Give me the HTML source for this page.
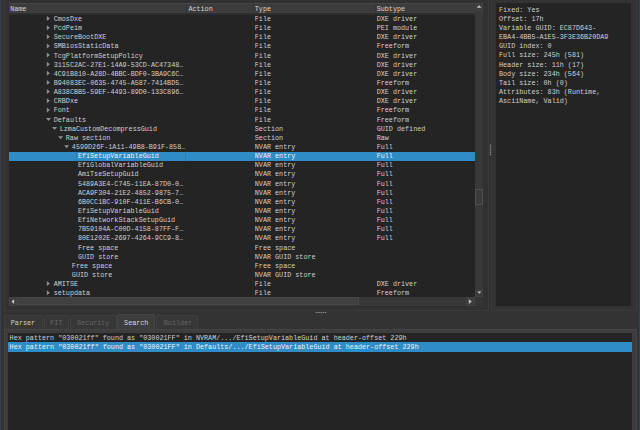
<!DOCTYPE html>
<html><head><meta charset="utf-8">
<style>
*{margin:0;padding:0;box-sizing:border-box}
html,body{width:640px;height:430px;overflow:hidden;background:#333333}
body{position:relative;font-family:"Liberation Mono",monospace;font-size:6.75px;color:#d0d0d0}
#edgeL{position:absolute;left:0;top:0;width:1px;height:430px;background:#3a404c}
#edgeR{position:absolute;left:639px;top:0;width:1px;height:430px;background:#3a404c}
#frameL{position:absolute;left:4px;top:0;width:485px;height:311px;background:#313131;border:1px solid #3a3a3a;border-top:none}
#frameR{position:absolute;left:491px;top:0;width:146px;height:311px;background:#333333;border:1px solid #3a3a3a;border-top:none}
#splitV{position:absolute;left:489px;top:0;width:2px;height:311px;background:#313131}
#tree{position:absolute;left:9px;top:3px;width:474.2px;height:303px;background:#242424;overflow:hidden}
#hdr{position:absolute;z-index:2;left:0;top:0;width:465.5px;height:12px;background:#3c3c3c;border-top:1px solid #464646;border-bottom:2px solid #2d2d2d;box-shadow:inset 0 -1px 0 #414141}
#hdr span{position:absolute;top:1.3px;line-height:9px;color:#d8d8d8}
.sep{position:absolute;top:0px;width:1px;height:9px;background:#363636}
#rows{position:absolute;left:-9px;top:-3px;width:483.5px;height:306px}
.row{position:absolute;left:9px;width:465.5px;height:9.6px}
.row.sel::before{content:'';position:absolute;left:0;top:0.8px;width:100%;height:9.2px;background:#308cc6}
.row .t{position:absolute;top:1.0px;line-height:9.14px;white-space:pre;left:0}
.row.sel .t{color:#eef4fa}
#vsb{position:absolute;left:466px;top:0;width:8.2px;height:303px;background:#383838}
.btn{position:absolute;background:#3c3c3c;border:1px solid #424242}
#vh{position:absolute;left:0.3px;top:186.4px;width:8px;height:15.6px;background:#3b3b3b;border:1px solid #505050}
#hsb{position:absolute;left:0;top:293.7px;width:466px;height:9.3px;background:#373737}
#hh{position:absolute;left:8.4px;top:0.5px;width:341.7px;height:8.3px;background:#404040;border:1px solid #484848}
#corner{position:absolute;left:466px;top:294px;width:8.5px;height:9px;background:#353535}
#dotsV{position:absolute;left:490px;top:144.5px;width:1px;height:10px;border-left:1px dotted #8a8a8a}
#info{position:absolute;left:496.3px;top:3px;width:134.4px;height:302.5px;background:#242424}
.il{position:absolute;left:2.7px;line-height:9.15px;white-space:pre}
#dotsH{position:absolute;left:315px;top:312.5px;width:10px;height:1px;border-top:1px dotted #8a8a8a}
.tab{position:absolute;top:315.2px;height:14px;background:#373737;border:1px solid #3f3f3f;border-bottom:none;border-radius:2px 2px 0 0;color:#666666}
.tab span{position:absolute;top:2.9px;line-height:9px;white-space:pre}
.tab.act{top:314px;height:15.2px;background:#3d3d3d;color:#d8d8d8;border-color:#464646}
#tabpane{position:absolute;left:4px;top:328.6px;width:632.5px;height:110px;background:#3d3d3d;border:1px solid #444444}
#msgs{position:absolute;left:8px;top:332.5px;width:623.7px;height:98px;background:#242424}
.ml{position:absolute;left:0;width:623.7px;height:9.8px}
.ml span{position:absolute;left:1.6px;top:1.1px;line-height:9.14px;white-space:pre;font-size:6.75px}
.ml.sel{background:#308cc6}
.ml.sel span{color:#eef4fa}
#ov{position:absolute;left:0;top:0;z-index:10}
</style></head><body>
<div id="edgeL"></div><div id="edgeR"></div>
<div id="frameL"></div>
<div id="splitV"></div>
<div id="frameR"></div>
<div id="tree">
  <div id="hdr">
    <span style="left:1.2px">Name</span>
    <div class="sep" style="left:177.4px"></div><span style="left:179.4px">Action</span>
    <div class="sep" style="left:243.5px"></div><span style="left:245.8px">Type</span>
    <div class="sep" style="left:366px"></div><span style="left:367.7px">Subtype</span>
  </div>
  <div id="rows">
<div class="row" style="top:14.00px"><span class="t" style="left:44.70px">CmosDxe</span><span class="t" style="left:245.8px">File</span><span class="t" style="left:367.7px">DXE driver</span></div>
<div class="row" style="top:23.14px"><span class="t" style="left:44.70px">PcdPeim</span><span class="t" style="left:245.8px">File</span><span class="t" style="left:367.7px">PEI module</span></div>
<div class="row" style="top:32.28px"><span class="t" style="left:44.70px">SecureBootDXE</span><span class="t" style="left:245.8px">File</span><span class="t" style="left:367.7px">DXE driver</span></div>
<div class="row" style="top:41.42px"><span class="t" style="left:44.70px">SMBiosStaticData</span><span class="t" style="left:245.8px">File</span><span class="t" style="left:367.7px">Freeform</span></div>
<div class="row" style="top:50.56px"><span class="t" style="left:44.70px">TcgPlatformSetupPolicy</span><span class="t" style="left:245.8px">File</span><span class="t" style="left:367.7px">DXE driver</span></div>
<div class="row" style="top:59.70px"><span class="t" style="left:44.70px">3115C2AC-27E1-14A9-53CD-AC47348…</span><span class="t" style="left:245.8px">File</span><span class="t" style="left:367.7px">DXE driver</span></div>
<div class="row" style="top:68.84px"><span class="t" style="left:44.70px">4C91B810-A28D-4BBC-BDF0-3BA9C6C…</span><span class="t" style="left:245.8px">File</span><span class="t" style="left:367.7px">DXE driver</span></div>
<div class="row" style="top:77.98px"><span class="t" style="left:44.70px">B94083EC-0635-4745-A587-7414BD5…</span><span class="t" style="left:245.8px">File</span><span class="t" style="left:367.7px">Freeform</span></div>
<div class="row" style="top:87.12px"><span class="t" style="left:44.70px">A838CBB5-59EF-4493-89D0-133C896…</span><span class="t" style="left:245.8px">File</span><span class="t" style="left:367.7px">DXE driver</span></div>
<div class="row" style="top:96.26px"><span class="t" style="left:44.70px">CRBDxe</span><span class="t" style="left:245.8px">File</span><span class="t" style="left:367.7px">DXE driver</span></div>
<div class="row" style="top:105.40px"><span class="t" style="left:44.70px">Font</span><span class="t" style="left:245.8px">File</span><span class="t" style="left:367.7px">Freeform</span></div>
<div class="row" style="top:114.54px"><span class="t" style="left:44.70px">Defaults</span><span class="t" style="left:245.8px">File</span><span class="t" style="left:367.7px">Freeform</span></div>
<div class="row" style="top:123.68px"><span class="t" style="left:50.75px">LzmaCustomDecompressGuid</span><span class="t" style="left:245.8px">Section</span><span class="t" style="left:367.7px">GUID defined</span></div>
<div class="row" style="top:132.82px"><span class="t" style="left:56.80px">Raw section</span><span class="t" style="left:245.8px">Section</span><span class="t" style="left:367.7px">Raw</span></div>
<div class="row" style="top:141.96px"><span class="t" style="left:62.85px">4599D26F-1A11-49B8-B91F-858…</span><span class="t" style="left:245.8px">NVAR entry</span><span class="t" style="left:367.7px">Full</span></div>
<div class="row sel" style="top:151.10px"><div style="position:absolute;left:67.30px;top:0.8px;width:109.90px;height:9.2px;border-left:1px solid rgba(20,60,90,0.18);border-right:1px solid rgba(20,60,90,0.18)"></div><span class="t" style="left:68.90px">EfiSetupVariableGuid</span><span class="t" style="left:245.8px">NVAR entry</span><span class="t" style="left:367.7px">Full</span></div>
<div class="row" style="top:160.24px"><span class="t" style="left:68.90px">EfiGlobalVariableGuid</span><span class="t" style="left:245.8px">NVAR entry</span><span class="t" style="left:367.7px">Full</span></div>
<div class="row" style="top:169.38px"><span class="t" style="left:68.90px">AmiTseSetupGuid</span><span class="t" style="left:245.8px">NVAR entry</span><span class="t" style="left:367.7px">Full</span></div>
<div class="row" style="top:178.52px"><span class="t" style="left:68.90px">5489A3E4-C745-11EA-87D0-0…</span><span class="t" style="left:245.8px">NVAR entry</span><span class="t" style="left:367.7px">Full</span></div>
<div class="row" style="top:187.66px"><span class="t" style="left:68.90px">ACA9F304-21E2-4852-9875-7…</span><span class="t" style="left:245.8px">NVAR entry</span><span class="t" style="left:367.7px">Full</span></div>
<div class="row" style="top:196.80px"><span class="t" style="left:68.90px">6B0CC1BC-910F-411E-B6CB-0…</span><span class="t" style="left:245.8px">NVAR entry</span><span class="t" style="left:367.7px">Full</span></div>
<div class="row" style="top:205.94px"><span class="t" style="left:68.90px">EfiSetupVariableGuid</span><span class="t" style="left:245.8px">NVAR entry</span><span class="t" style="left:367.7px">Full</span></div>
<div class="row" style="top:215.08px"><span class="t" style="left:68.90px">EfiNetworkStackSetupGuid</span><span class="t" style="left:245.8px">NVAR entry</span><span class="t" style="left:367.7px">Full</span></div>
<div class="row" style="top:224.22px"><span class="t" style="left:68.90px">7B59104A-C00D-4158-87FF-F…</span><span class="t" style="left:245.8px">NVAR entry</span><span class="t" style="left:367.7px">Full</span></div>
<div class="row" style="top:233.36px"><span class="t" style="left:68.90px">80E1202E-2697-4264-9CC9-8…</span><span class="t" style="left:245.8px">NVAR entry</span><span class="t" style="left:367.7px">Full</span></div>
<div class="row" style="top:242.50px"><span class="t" style="left:68.90px">Free space</span><span class="t" style="left:245.8px">Free space</span></div>
<div class="row" style="top:251.64px"><span class="t" style="left:68.90px">GUID store</span><span class="t" style="left:245.8px">NVAR GUID store</span></div>
<div class="row" style="top:260.78px"><span class="t" style="left:62.85px">Free space</span><span class="t" style="left:245.8px">Free space</span></div>
<div class="row" style="top:269.92px"><span class="t" style="left:62.85px">GUID store</span><span class="t" style="left:245.8px">NVAR GUID store</span></div>
<div class="row" style="top:279.06px"><span class="t" style="left:44.70px">AMITSE</span><span class="t" style="left:245.8px">File</span><span class="t" style="left:367.7px">DXE driver</span></div>
<div class="row" style="top:288.20px"><span class="t" style="left:44.70px">setupdata</span><span class="t" style="left:245.8px">File</span><span class="t" style="left:367.7px">Freeform</span></div>
  </div>
  <div id="vsb">
    <div class="btn" style="left:0;top:0;width:8.2px;height:7.5px"></div>
    <div id="vh"></div>
    <div class="btn" style="left:0;top:285.7px;width:8.2px;height:8.3px"></div>
  </div>
  <div id="hsb">
    <div class="btn" style="left:0;top:0;width:7.6px;height:9px"></div>
    <div id="hh"></div>
    <div class="btn" style="left:457.3px;top:0;width:8.7px;height:9px"></div>
  </div>
  <div id="corner"></div>
</div>

<div id="info">
<div class="il" style="top:2.60px">Fixed: Yes</div>
<div class="il" style="top:11.75px">Offset: 17h</div>
<div class="il" style="top:20.90px">Variable GUID: EC87D643-</div>
<div class="il" style="top:30.05px">EBA4-4BB5-A1E5-3F3E36B20DA9</div>
<div class="il" style="top:39.20px">GUID index: 0</div>
<div class="il" style="top:48.35px">Full size: 245h (581)</div>
<div class="il" style="top:57.50px">Header size: 11h (17)</div>
<div class="il" style="top:66.65px">Body size: 234h (564)</div>
<div class="il" style="top:75.80px">Tail size: 0h (0)</div>
<div class="il" style="top:84.95px">Attributes: 83h (Runtime,</div>
<div class="il" style="top:94.10px">AsciiName, Valid)</div>
</div>

<div id="tabpane"></div>
<div class="tab" style="left:4.3px;width:38.3px"><span style="left:5.5px;color:#d0d0d0">Parser</span></div>
<div class="tab" style="left:43.5px;width:25.6px"><span style="left:5.8px">FIT</span></div>
<div class="tab" style="left:70px;width:46.5px"><span style="left:6px">Security</span></div>
<div class="tab act" style="left:117.3px;width:38px"><span style="left:5.8px;top:3.9px">Search</span></div>
<div class="tab" style="left:156.3px;width:41.8px"><span style="left:6.5px">Builder</span></div>
<div id="msgs">
  <div class="ml" style="top:0"><span>Hex pattern "030021ff" found as "030021FF" in NVRAM/.../EfiSetupVariableGuid at header-offset 229h</span></div>
  <div class="ml sel" style="top:9.5px"><span>Hex pattern "030021ff" found as "030021FF" in Defaults/.../EfiSetupVariableGuid at header-offset 229h</span></div>
</div>
<svg id="ov" width="640" height="430" viewBox="0 0 640 430">
<polygon fill="#8f8f8f" points="46.80,16.00 49.90,18.50 46.80,21.00"/>
<polygon fill="#8f8f8f" points="46.80,25.14 49.90,27.64 46.80,30.14"/>
<polygon fill="#8f8f8f" points="46.80,34.28 49.90,36.78 46.80,39.28"/>
<polygon fill="#8f8f8f" points="46.80,43.42 49.90,45.92 46.80,48.42"/>
<polygon fill="#8f8f8f" points="46.80,52.56 49.90,55.06 46.80,57.56"/>
<polygon fill="#8f8f8f" points="46.80,61.70 49.90,64.20 46.80,66.70"/>
<polygon fill="#8f8f8f" points="46.80,70.84 49.90,73.34 46.80,75.84"/>
<polygon fill="#8f8f8f" points="46.80,79.98 49.90,82.48 46.80,84.98"/>
<polygon fill="#8f8f8f" points="46.80,89.12 49.90,91.62 46.80,94.12"/>
<polygon fill="#8f8f8f" points="46.80,98.26 49.90,100.76 46.80,103.26"/>
<polygon fill="#8f8f8f" points="46.80,107.40 49.90,109.90 46.80,112.40"/>
<polygon fill="#8f8f8f" points="46.00,117.94 51.00,117.94 48.50,120.94"/>
<polygon fill="#8f8f8f" points="52.05,127.08 57.05,127.08 54.55,130.08"/>
<polygon fill="#8f8f8f" points="58.10,136.22 63.10,136.22 60.60,139.22"/>
<polygon fill="#8f8f8f" points="64.15,145.36 69.15,145.36 66.65,148.36"/>
<polygon fill="#8f8f8f" points="46.80,281.06 49.90,283.56 46.80,286.06"/>
<polygon fill="#8f8f8f" points="46.80,290.20 49.90,292.70 46.80,295.20"/>
<rect x="315.60" y="312.0" width="1.1" height="1.1" fill="#9a9a9a"/>
<rect x="489.9" y="144.60" width="1.1" height="1.1" fill="#9a9a9a"/>
<rect x="317.50" y="312.0" width="1.1" height="1.1" fill="#9a9a9a"/>
<rect x="489.9" y="146.50" width="1.1" height="1.1" fill="#9a9a9a"/>
<rect x="319.40" y="312.0" width="1.1" height="1.1" fill="#9a9a9a"/>
<rect x="489.9" y="148.40" width="1.1" height="1.1" fill="#9a9a9a"/>
<rect x="321.30" y="312.0" width="1.1" height="1.1" fill="#9a9a9a"/>
<rect x="489.9" y="150.30" width="1.1" height="1.1" fill="#9a9a9a"/>
<rect x="323.20" y="312.0" width="1.1" height="1.1" fill="#9a9a9a"/>
<rect x="489.9" y="152.20" width="1.1" height="1.1" fill="#9a9a9a"/>
<rect x="325.10" y="312.0" width="1.1" height="1.1" fill="#9a9a9a"/>
<rect x="489.9" y="154.10" width="1.1" height="1.1" fill="#9a9a9a"/>
<polygon fill="#c4c4c4" points="476.6,7.8 479.1,5.3 481.6,7.8"/>
<polygon fill="#c4c4c4" points="477.2,291.4 481.4,291.4 479.3,293.8"/>
<polygon fill="#c4c4c4" points="14.2,299.3 11.4,301.6 14.2,303.9"/>
<polygon fill="#c4c4c4" points="468.8,299.3 471.8,301.6 468.8,303.9"/>
</svg>
</body></html>
